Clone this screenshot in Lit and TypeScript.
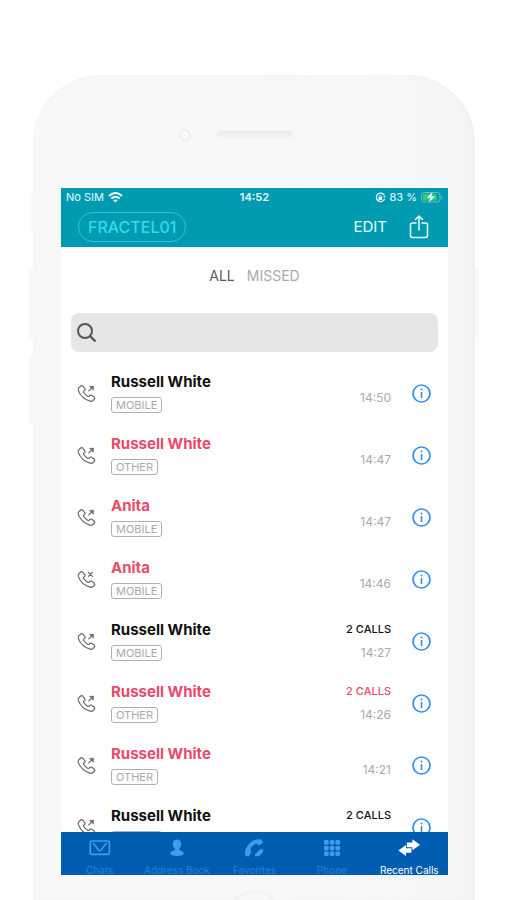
import { LitElement, html, css, svg } from "lit";
import { customElement, property } from "lit/decorators.js";
import { classMap } from "lit/directives/class-map.js";

interface Call {
  name: string;
  line: "MOBILE" | "OTHER";
  time: string;
  missed?: boolean;
  cancelled?: boolean;
  count?: number;
}

const CALLS: Call[] = [
  { name: "Russell White", line: "MOBILE", time: "14:50" },
  { name: "Russell White", line: "OTHER", time: "14:47", missed: true },
  { name: "Anita", line: "MOBILE", time: "14:47", missed: true },
  { name: "Anita", line: "MOBILE", time: "14:46", missed: true, cancelled: true },
  { name: "Russell White", line: "MOBILE", time: "14:27", count: 2 },
  { name: "Russell White", line: "OTHER", time: "14:26", missed: true, count: 2 },
  { name: "Russell White", line: "OTHER", time: "14:21", missed: true },
  { name: "Russell White", line: "MOBILE", time: "14:19", count: 2 },
];

const icons = {
  chats: svg`<rect x="1.2" y="3" width="19.200" height="13.400" rx="1.800" fill="none" stroke="currentColor" stroke-width="1.600"/>
    <path d="M4 5L9.600 12Q10.800 13.200 12 12L17.600 5" fill="none" stroke="currentColor" stroke-width="1.600"/>`,
  book: svg`<path d="M11 1.500c2.700 0 4.200 1.900 4.200 4.400c0 2.200-.9 3.900-1.900 4.900v1.200c2.600.8 4.500 1.800 4.500 3.700c0 1.400-2.900 2.200-6.800 2.200s-6.800-.8-6.800-2.200c0-1.900 1.900-2.900 4.500-3.700V10.800C7.700 9.800 6.800 8.100 6.800 5.900C6.800 3.400 8.300 1.500 11 1.500z" fill="currentColor"/>`,
  favorites: svg`<path d="M1.800 15.800C2 9.500 7.500 2.600 13.800 1.400L17.800 1.200L20.400 4.600L15.800 7.600L13.600 5.800C9.800 6.800 7.600 9.400 7.400 12.600L8.600 14.400L5.400 18.600C3.200 18.400 1.800 17.400 1.800 15.800z" fill="currentColor"/>
    <path d="M13.600 14.800L16.200 11.800L20.200 11L19.800 14.600L16 18L12.400 18.400L11.600 16.600z" fill="currentColor"/>`,
  phone: svg`${[0, 1, 2].map((r) =>
    [0, 1, 2].map(
      (c) => svg`<rect x=${3 + c * 5.700} y=${2 + r * 5.700} width="4.700" height="4.700" rx="1.400" fill="currentColor"/>`
    )
  )}`,
  recent: svg`<path d="M8.800 4.400h5.600V1.200L22 6.700L14.400 12.200V9.200h-5.600z" fill="currentColor"/>
    <path d="M13.400 10.200v4.600h-5.400v3.200L.4 12.400L8 7v3.200z" fill="currentColor"/>`,
};

const TABS = [
  { label: "Chats", icon: icons.chats },
  { label: "Address Book", icon: icons.book },
  { label: "Favorites", icon: icons.favorites },
  { label: "Phone", icon: icons.phone },
  { label: "Recent Calls", icon: icons.recent, active: true },
];

@customElement("call-row")
export class CallRow extends LitElement {
  @property({ attribute: false }) call!: Call;

  static styles = css`
    :host {
      display: flex;
      align-items: center;
      height: 62px;
      padding: 0 16px;
      flex: none;
      box-sizing: border-box;
      color: #111;
    }
    .handset {
      width: 20px;
      height: 20px;
      flex: none;
      color: #666;
    }
    .who {
      flex: 1;
      min-width: 0;
      margin-left: 14px;
      display: flex;
      flex-direction: column;
      align-items: flex-start;
      gap: 6px;
    }
    .name {
      font-size: 15px;
      line-height: 18px;
      font-weight: 700;
    }
    .missed {
      color: #ea4a6b;
    }
    .line {
      box-sizing: border-box;
      height: 16px;
      padding: 0 4px;
      border: 1px solid #b0b0b0;
      border-radius: 3px;
      font-size: 11px;
      line-height: 14px;
      color: #aaa;
    }
    .when {
      display: flex;
      flex-direction: column;
      align-items: flex-end;
      line-height: 23px;
      margin-right: 20px;
    }
    .single {
      padding-top: 8px;
    }
    .count {
      font-size: 11px;
      font-weight: 500;
    }
    .time {
      font-size: 12px;
      color: #aaa;
    }
    .info {
      width: 21px;
      height: 21px;
      flex: none;
      padding: 0;
      border: 0;
      background: none;
      color: #2f8ff0;
    }
    .info svg {
      display: block;
    }
  `;

  render() {
    const c = this.call;
    const tone = { missed: !!c.missed };
    return html`
      <svg class="handset" viewBox="0 0 20 20" fill="none" stroke="currentColor" stroke-width="1.2" stroke-linejoin="round" stroke-linecap="round">
        <path d="M1.800 4.800L4 2.800Q4.900 2.200 5.700 3L7.900 5.800Q8.400 6.700 7.700 7.400L6.700 8.300Q6.300 8.900 6.700 9.500Q8.400 12 10.900 13.400Q11.600 13.700 12.100 13.200L13.100 12.300Q13.900 11.700 14.700 12.300L17.400 14.300Q18.200 15.100 17.500 16L15.700 17.800Q14.700 18.600 13.200 18.200Q4.200 15.600 1.300 7.400Q.9 5.700 1.800 4.800z"/>
        ${c.cancelled
          ? svg`<path d="M11.400 3.400L15.400 7.400M15.400 3.400L11.400 7.400"/>`
          : svg`<path d="M11.800 7.900L16 3.700"/><path d="M12.800 3.300H16.400V6.900z" fill="currentColor" stroke-width=".6"/>`}
      </svg>
      <div class="who">
        <span class=${classMap({ name: true, ...tone })}>${c.name}</span>
        <span class="line">${c.line}</span>
      </div>
      <div class=${classMap({ when: true, single: !c.count })}>
        ${c.count ? html`<span class=${classMap({ count: true, ...tone })}>${c.count} CALLS</span>` : ""}
        <time class="time">${c.time}</time>
      </div>
      <button class="info" aria-label="Call details">
        <svg width="21" height="21" viewBox="0 0 21 21" fill="none" stroke="currentColor">
          <circle cx="10.500" cy="10.500" r="8.500" stroke-width="1.700"/>
          <path d="M10.500 9V15" stroke-width="1.600"/>
          <circle cx="10.500" cy="6.600" r="1" fill="currentColor" stroke="none"/>
        </svg>
      </button>
    `;
  }
}

@customElement("app-root")
export class AppRoot extends LitElement {
  static styles = css`
    :host {
      display: flex;
      height: 100vh;
      box-sizing: border-box;
      padding: 75px 32px 0 33px;
      overflow: hidden;
      background: #fff;
      font-family: Inter, "Liberation Sans", sans-serif;
    }
    .phone {
      position: relative;
      flex: 1;
      min-width: 0;
      box-sizing: border-box;
      display: flex;
      flex-direction: column;
      padding: 0 27px 0 28px;
      border-radius: 68px 68px 0 0;
      background: linear-gradient(90deg, #f8f8f9, #f7f8f9 50%, #f5f6f7 96%, #f1f2f4);
      box-shadow: inset 0 2px 3px #f4f4f5, inset -2px 0 2px #eeeff1;
    }
    .key {
      position: absolute;
      width: 4px;
      background: #f9f9fa;
      border-radius: 3px;
    }
    .mute {
      left: -3px;
      top: 118px;
      height: 38px;
    }
    .up {
      left: -4px;
      top: 194px;
      height: 70px;
    }
    .down {
      left: -4px;
      top: 279px;
      height: 70px;
    }
    .power {
      right: -4px;
      top: 194px;
      height: 68px;
      box-sizing: border-box;
      border: 1px solid #f3f4f5;
    }
    .bezel {
      flex: none;
      height: 113px;
      box-sizing: border-box;
      padding-top: 6px;
      display: grid;
      grid-template-columns: 1fr 76px 1fr;
      align-items: center;
    }
    .camera {
      justify-self: end;
      margin-right: 26px;
      width: 12px;
      height: 12px;
      box-sizing: border-box;
      border: 2px solid #eeeef0;
      border-radius: 50%;
      background: #f8f9fa;
    }
    .speaker {
      height: 7px;
      border-radius: 3px;
      background: linear-gradient(#e9eaeb, #f4f5f6);
    }
    .screen {
      flex: 1;
      min-height: 0;
      display: flex;
      flex-direction: column;
      background: #fff;
    }
    .chin {
      flex: none;
      height: 25px;
      display: flex;
      justify-content: center;
      overflow: hidden;
    }
    .home {
      flex: none;
      margin-top: 16px;
      width: 56px;
      height: 56px;
      box-sizing: border-box;
      border: 2px solid #f2f2f3;
      border-radius: 50%;
    }
    .top {
      flex: none;
      background: #009bb0;
      color: #e9fbfd;
    }
    .status {
      display: grid;
      grid-template-columns: 1fr auto 1fr;
      align-items: center;
      height: 18px;
      padding: 0 5px;
      font-size: 11px;
    }
    .side {
      display: flex;
      align-items: center;
      gap: 4px;
    }
    .end {
      justify-content: flex-end;
    }
    .clock {
      font-weight: 600;
    }
    .bar {
      display: flex;
      align-items: center;
      height: 41px;
      padding: 0 17px;
    }
    .account,
    .edit,
    .share {
      background: none;
      border: 0;
      padding: 0;
      font: inherit;
      color: inherit;
    }
    .account {
      height: 30px;
      padding: 0 9px;
      border: 1px solid #29c4d8;
      border-radius: 15px;
      font-size: 16px;
      font-weight: 500;
      color: #2fdcee;
      margin-right: auto;
    }
    .edit {
      font-size: 15px;
      margin-right: 20px;
    }
    .share svg {
      display: block;
    }
    .filters {
      flex: none;
      height: 66px;
      box-sizing: border-box;
      padding-bottom: 10px;
      display: flex;
      justify-content: center;
      align-items: center;
      gap: 12px;
    }
    .filter {
      background: none;
      border: 0;
      padding: 0;
      font: 14px Inter, "Liberation Sans", sans-serif;
      color: #aaa;
    }
    .chosen {
      color: #5a5a5a;
    }
    .search {
      flex: none;
      display: flex;
      align-items: center;
      height: 39px;
      margin: 0 10px 10px;
      padding: 0 5px;
      box-sizing: border-box;
      border-radius: 8px;
      background: #e6e6e6;
      color: #555;
    }
    .query {
      flex: 1;
      min-width: 0;
      margin-left: 8px;
      border: 0;
      outline: 0;
      background: none;
      font: 15px Inter, "Liberation Sans", sans-serif;
    }
    .list {
      flex: 1;
      min-height: 0;
      overflow: hidden;
      display: flex;
      flex-direction: column;
    }
    .tabs {
      flex: none;
      display: grid;
      grid-template-columns: repeat(5, 1fr);
      height: 43px;
      background: #005cb0;
    }
    .tab {
      display: flex;
      flex-direction: column;
      align-items: center;
      gap: 6px;
      padding-top: 6px;
      font-size: 10px;
      line-height: 12px;
      white-space: nowrap;
      text-decoration: none;
      color: #2381d6;
    }
    .tab svg {
      color: #429be8;
    }
    .active,
    .active svg {
      color: #fff;
    }
  `;

  render() {
    return html`
      <div class="phone">
        <span class="key mute"></span>
        <span class="key up"></span>
        <span class="key down"></span>
        <span class="key power"></span>
        <div class="bezel">
          <span class="camera"></span>
          <span class="speaker"></span>
        </div>
        <main class="screen">
          <header class="top">
            <div class="status">
              <div class="side">
                <span>No SIM</span>
                <svg width="15" height="11" viewBox="0 0 15 11" fill="none" stroke="currentColor" stroke-width="2">
                  <path d="M1 4Q7.500 -2 14 4M3.400 6.600Q7.500 3 11.600 6.600"/>
                  <path d="M7.500 10.600L5.200 8.300Q7.500 6.500 9.800 8.300z" fill="currentColor" stroke="none"/>
                </svg>
              </div>
              <time class="clock">14:52</time>
              <div class="side end">
                <svg width="11" height="11" viewBox="0 0 11 11" fill="none" stroke="currentColor">
                  <path d="M9.500 3.500A4.300 4.300 0 1 0 9.600 7" stroke-width="1.200"/>
                  <path d="M8 4.500L9.600 6L11 4.200z" fill="currentColor" stroke="none"/>
                  <rect x="3.400" y="5" width="3.800" height="3" fill="currentColor" stroke="none"/>
                  <path d="M4.200 5V4.200Q5.300 2.400 6.400 4.200V5"/>
                </svg>
                <span>83 %</span>
                <svg width="22" height="12" viewBox="0 0 22 12">
                  <rect x=".5" y="1.500" width="18.500" height="9.500" rx="2.500" fill="none" stroke="#5fc2cd"/>
                  <rect x="2" y="3" width="13.500" height="6.500" rx="1" fill="#35d05a"/>
                  <path d="M20 4.500Q22.200 6.200 20 8z" fill="#5fc2cd"/>
                  <path d="M12 0L5.500 7H9L7.500 12L14.500 5H10.800z" fill="#fff" stroke="#009bb0" stroke-width=".4"/>
                </svg>
              </div>
            </div>
            <div class="bar">
              <button class="account">FRACTEL01</button>
              <button class="edit">EDIT</button>
              <button class="share" aria-label="Share">
                <svg width="24" height="24" viewBox="0 0 24 24" fill="none" stroke="currentColor" stroke-width="1.500" stroke-linecap="round" stroke-linejoin="round">
                  <path d="M9 8H5.600Q3.500 8 3.500 10V20.500Q3.500 22.500 5.600 22.500H18.400Q20.500 22.500 20.500 20.500V10Q20.500 8 18.400 8H15M12 15V1.200M8.600 4.400L12 1L15.400 4.400"/>
                </svg>
              </button>
            </div>
          </header>
          <div class="filters">
            <button class="filter chosen">ALL</button>
            <button class="filter">MISSED</button>
          </div>
          <label class="search">
            <svg width="22" height="22" viewBox="0 0 22 22" fill="none" stroke="currentColor" stroke-width="2">
              <circle cx="9" cy="9" r="7"/>
              <path d="M14 14L19.500 19.500" stroke-width="2.400"/>
            </svg>
            <input class="query" type="search" aria-label="Search" />
          </label>
          <section class="list">
            ${CALLS.map((call) => html`<call-row .call=${call}></call-row>`)}
          </section>
          <nav class="tabs">
            ${TABS.map(
              (t) => html`<a href="#" class=${classMap({ tab: true, active: !!t.active })}>
                <svg width="22" height="20" viewBox="0 0 22 20">${t.icon}</svg>
                <span>${t.label}</span>
              </a>`
            )}
          </nav>
        </main>
        <div class="chin"><span class="home"></span></div>
      </div>
    `;
  }
}
